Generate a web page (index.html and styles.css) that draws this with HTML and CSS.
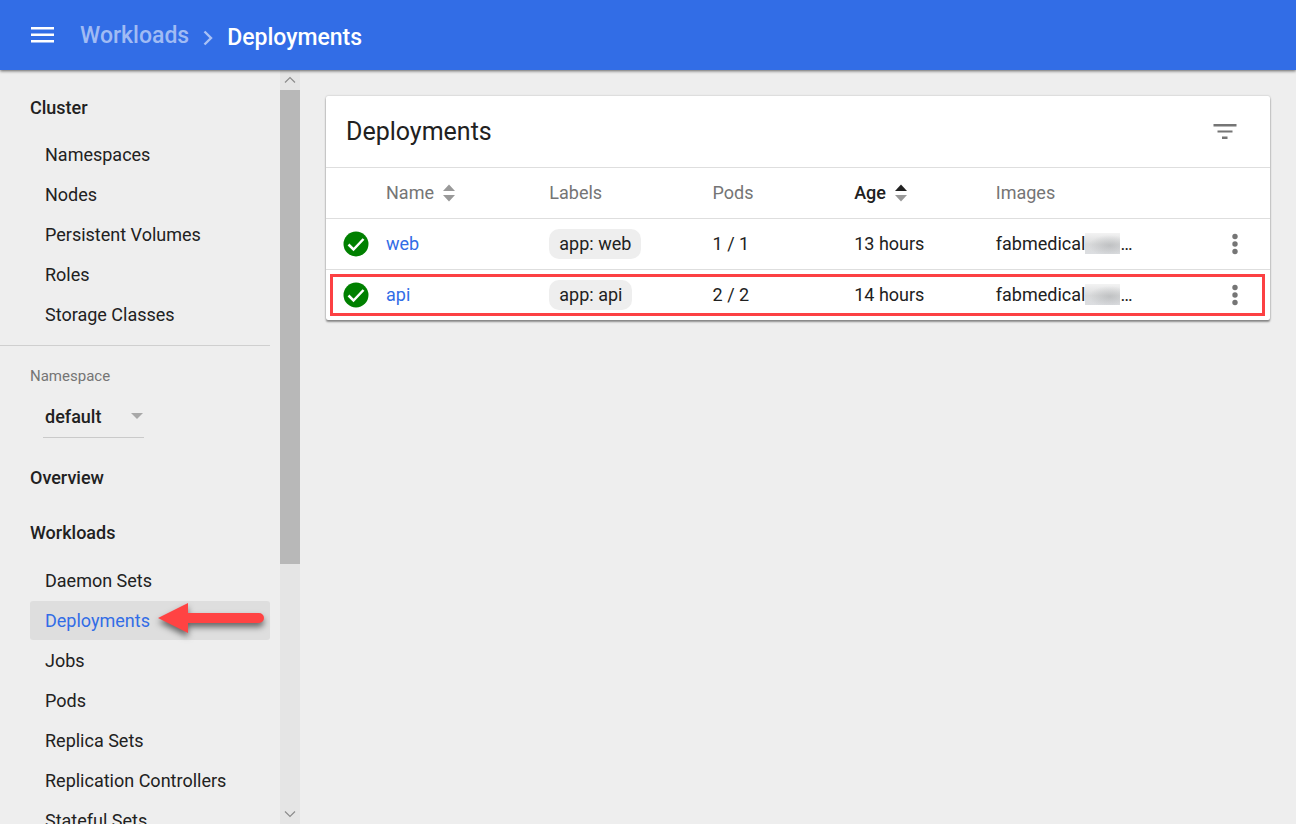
FILE: index.html
```html
<!DOCTYPE html>
<html lang="en">
<head>
<meta charset="utf-8">
<title>Deployments</title>
<link rel="stylesheet" href="styles.css">
</head>
<body>
<header class="topbar">
  <button class="icon-button menu-button" type="button" aria-label="Menu">
    <svg width="24" height="24" viewBox="0 0 24 24" fill="#fff"><path d="M1 4h23v2.500H1zM1 10.500h23V13H1zM1 17h23v2.500H1z"/></svg>
  </button>
  <nav class="crumbs" aria-label="Breadcrumb">
    <a class="crumb" href="#">Workloads</a>
    <svg class="crumb-arrow" width="10" height="16" viewBox="0 0 10 16" fill="none" stroke="#a9c1f5" stroke-width="2.4"><path d="M1.5 1.5 8 8l-6.500 6.500"/></svg>
    <span class="crumb-current">Deployments</span>
  </nav>
</header>
<div class="layout">
  <aside class="sidebar">
    <nav class="nav" aria-label="Resources">
      <section class="group">
        <a class="heading" href="#">Cluster</a>
        <a class="item" href="#">Namespaces</a>
        <a class="item" href="#">Nodes</a>
        <a class="item" href="#">Persistent Volumes</a>
        <a class="item" href="#">Roles</a>
        <a class="item" href="#">Storage Classes</a>
      </section>
      <section class="namespace">
        <label class="namespace-label" for="ns">Namespace</label>
        <div class="select-box">
          <select id="ns"><option>default</option></select>
          <svg class="select-arrow" width="12" height="6" viewBox="0 0 12 6" fill="#a8a8a8"><path d="M0 0h12L6 6z"/></svg>
        </div>
      </section>
      <section class="group-plain">
        <a class="heading" href="#">Overview</a>
      </section>
      <section class="group-plain">
        <a class="heading" href="#">Workloads</a>
        <a class="item" href="#">Daemon Sets</a>
        <a class="item item-active" href="#" aria-current="page">Deployments
          <svg class="pointer" width="116" height="44" viewBox="0 0 116 44" aria-hidden="true"><path fill="#ff4343" d="M4 20 34 5v10h71a5 5 0 0 1 0 10H34v10z"/></svg>
        </a>
        <a class="item" href="#">Jobs</a>
        <a class="item" href="#">Pods</a>
        <a class="item" href="#">Replica Sets</a>
        <a class="item" href="#">Replication Controllers</a>
        <a class="item" href="#">Stateful Sets</a>
      </section>
    </nav>
    <div class="scrollbar" aria-hidden="true">
      <svg class="scroll-end" width="20" height="20" viewBox="0 0 20 20" fill="none" stroke="#8c8c8c" stroke-width="1.2"><path d="M5 12.500 10 7.500l5 5"/></svg>
      <div class="track"><div class="thumb"></div></div>
      <svg class="scroll-end" width="20" height="20" viewBox="0 0 20 20" fill="none" stroke="#8c8c8c" stroke-width="1.2"><path d="M5 7.500l5 5 5-5"/></svg>
    </div>
  </aside>
  <main class="content">
    <section class="card">
      <div class="card-head">
        <h1>Deployments</h1>
        <button class="icon-button" type="button" aria-label="Filter">
          <svg width="24" height="18" viewBox="0 0 24 18" fill="#757575"><path d="M0.500 1h23v2.500h-23zM4.500 7.500h15v2h-15zM9 13.500h5.500V16H9z"/></svg>
        </button>
      </div>
      <table>
        <colgroup><col class="col-status"><col class="col-wide"><col class="col-wide"><col class="col-mid"><col class="col-mid"><col><col class="col-menu"></colgroup>
        <thead>
          <tr>
            <th></th>
            <th><button class="sort" type="button">Name
              <svg width="12" height="18" viewBox="0 0 12 18" fill="#999"><path d="M0 7h12L6 0.500zM0 11h12L6 17.500z"/></svg></button></th>
            <th>Labels</th>
            <th>Pods</th>
            <th><button class="sort sort-on" type="button">Age
              <svg width="12" height="18" viewBox="0 0 12 18"><path fill="#212121" d="M0 7h12L6 0.500z"/><path fill="#999" d="M0 11h12L6 17.500z"/></svg></button></th>
            <th>Images</th>
            <th></th>
          </tr>
        </thead>
        <tbody>
          <tr>
            <td class="status"><svg width="26" height="26" viewBox="0 0 26 26"><circle cx="13" cy="13" r="12.500" fill="#008000"/><path d="M5.500 13.500 10.500 18.500 20.500 8" fill="none" stroke="#fff" stroke-width="2.500"/></svg></td>
            <td><a href="#">web</a></td>
            <td><span class="chip">app: web</span></td>
            <td>1 / 1</td>
            <td>13 hours</td>
            <td><span class="image">fabmedical<i class="masked"></i>…</span></td>
            <td class="menu"><button class="icon-button" type="button" aria-label="Actions for web"><svg width="6" height="22" viewBox="0 0 6 22" fill="#757575"><circle cx="3" cy="3.500" r="2.700"/><circle cx="3" cy="11" r="2.700"/><circle cx="3" cy="18.500" r="2.700"/></svg></button></td>
          </tr>
          <tr class="marked">
            <td class="status"><svg width="26" height="26" viewBox="0 0 26 26"><circle cx="13" cy="13" r="12.500" fill="#008000"/><path d="M5.500 13.500 10.500 18.500 20.500 8" fill="none" stroke="#fff" stroke-width="2.500"/></svg><span class="outline"></span></td>
            <td><a href="#">api</a></td>
            <td><span class="chip">app: api</span></td>
            <td>2 / 2</td>
            <td>14 hours</td>
            <td><span class="image">fabmedical<i class="masked"></i>…</span></td>
            <td class="menu"><button class="icon-button" type="button" aria-label="Actions for api"><svg width="6" height="22" viewBox="0 0 6 22" fill="#757575"><circle cx="3" cy="3.500" r="2.700"/><circle cx="3" cy="11" r="2.700"/><circle cx="3" cy="18.500" r="2.700"/></svg></button></td>
          </tr>
        </tbody>
      </table>
    </section>
  </main>
</div>
</body>
</html>
```

FILE: styles.css
```css
* { box-sizing: border-box; }

body {
  margin: 0;
  height: 100vh;
  display: flex;
  flex-direction: column;
  overflow: hidden;
  background: #eee;
  color: #212121;
  font: 400 18px/24px Roboto, "Liberation Sans", sans-serif;
}

a { color: #326de6; text-decoration: none; }
svg { display: block; }

button {
  border: 0;
  padding: 0;
  background: none;
  color: inherit;
  font: inherit;
  cursor: pointer;
}

/* Top bar */
.topbar {
  position: relative;
  z-index: 1;
  flex: none;
  display: flex;
  align-items: center;
  height: 70px;
  padding: 0 30px;
  background: #326de6;
  box-shadow: 0 1px 3px rgba(0, 0, 0, .6);
}

.menu-button { margin-right: 26px; }
.crumbs { display: flex; align-items: center; padding-top: 2px; font-size: 23px; font-weight: 500; line-height: 28px; }
.crumb { color: #a0bbf4; }
.crumb-arrow { margin: 4px 14px 0 14px; }
.crumb-current { padding-top: 4px; color: #fff; }

/* Sidebar */
.layout { flex: 1; display: flex; min-height: 0; }
.sidebar { flex: none; display: flex; width: 300px; }
.nav { flex: 1; overflow: hidden; padding-top: 18px; }

.group {
  margin-right: 10px;
  padding: 0 0 10px 30px;
  border-bottom: 1px solid #cfcfcf;
}
.group-plain { margin: 0 10px 15px 30px; }

.heading, .item {
  display: block;
  height: 40px;
  line-height: 40px;
  color: #212121;
}
.heading { font-weight: 500; margin-bottom: 8px; }
.group .heading { margin-bottom: 7px; }
.group-plain .heading:only-child { margin-bottom: 0; }
.item { padding-left: 15px; border-radius: 3px; }
.item-active {
  position: relative;
  height: 39px;
  margin-bottom: 1px;
  color: #326de6;
  background: #dedede;
}

.pointer {
  position: absolute;
  top: -3px;
  right: 0;
  filter: drop-shadow(0 4px 3px rgba(0, 0, 0, .55));
}

.namespace { padding: 18px 10px 20px 30px; }
.namespace-label { display: block; font-size: 15px; color: #757575; }
.select-box { position: relative; width: 101px; margin: 8px 0 0 13px; }
.select-box select {
  appearance: none;
  display: block;
  width: 100%;
  height: 42px;
  padding: 0 20px 0 2px;
  border: 0;
  border-bottom: 1px solid #cacaca;
  border-radius: 0;
  background: none;
  color: #212121;
  font: inherit;
  font-weight: 500;
}
.select-arrow { position: absolute; top: 17px; right: 1px; pointer-events: none; }

.scrollbar { display: flex; flex-direction: column; width: 20px; background: #e5e5e5; }
.scroll-end { flex: none; }
.track { flex: 1; }
.thumb { height: 66.4%; background: #b8b8b8; }

/* Deployments card */
.content { flex: 1; min-width: 0; padding: 26px; }
.card {
  background: #fff;
  border-radius: 2px;
  box-shadow: 0 2px 2px rgba(0, 0, 0, .4), 0 0 2px rgba(0, 0, 0, .25);
}
.card-head {
  display: flex;
  align-items: center;
  justify-content: space-between;
  height: 71px;
  padding: 0 33px 0 20px;
}
h1 { margin: 0; font-size: 25px; font-weight: 400; line-height: 32px; }

table { width: 100%; border-collapse: separate; border-spacing: 0; table-layout: fixed; }
.col-status { width: 60px; }
.col-wide { width: 17.3%; }
.col-mid { width: 15%; }
.col-menu { width: 70px; }

th, td { height: 51px; padding: 0; border-top: 1px solid #dedede; text-align: left; font-weight: 400; }
th { color: #757575; }
.status { padding-left: 17px; }
.menu .icon-button { display: block; margin: 0 auto; }

.sort { display: flex; align-items: center; gap: 9px; }
.sort-on { color: #212121; font-weight: 500; }

.chip { display: inline-block; padding: 3px 10px; border-radius: 10px; background: #eee; }
.image { display: flex; }
.masked {
  width: 35px;
  height: 21px;
  margin-top: 1px;
  background:
    radial-gradient(ellipse at 70% 60%, rgba(175, 177, 179, .6), rgba(190, 192, 195, 0) 60%),
    linear-gradient(180deg, #f3f3f3, #d9dadb 55%, #dcdee1);
}

.marked { position: relative; }
.outline {
  position: absolute;
  inset: 5px 5px 4px 4px;
  border: 3px solid #fc4043;
  pointer-events: none;
}
```
